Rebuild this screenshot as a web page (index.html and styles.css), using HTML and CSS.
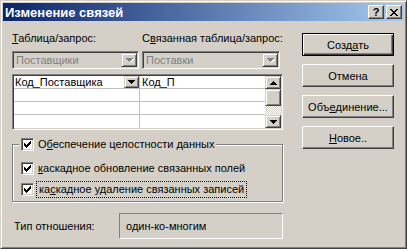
FILE: index.html
```html
<!DOCTYPE html>
<html lang="ru">
<head>
<meta charset="utf-8">
<title>Изменение связей</title>
<link rel="stylesheet" href="styles.css">
</head>
<body>
<div class="window">
  <div class="titlebar">
    <span class="title">Изменение связей</span>
    <div class="tbtns">
      <span class="tbtn q">?</span>
      <span class="tbtn x"><svg width="8" height="7" viewBox="0 0 8 7"><path d="M0 0h2v1h1v1h2V1h1V0h2v1H7v1H6v1H5v1h1v1h1v1h1v1H6V6H5V5H3v1H2v1H0V6h1V5h1V4h1V3H2V2H1V1H0z"/></svg></span>
    </div>
  </div>
  <div class="body">
    <div class="left">
      <div class="labels">
        <span class="lbl1"><u>Т</u>аблица/запрос:</span>
        <span class="lbl2">С<u>в</u>язанная таблица/запрос:</span>
      </div>
      <div class="combos">
        <div class="combo c1"><span class="ctext">Поставщики</span><span class="dd dis"><svg width="7" height="4" viewBox="0 0 7 4"><path d="M0 0h7v1H6v1H5v1H4v1H3V3H2V2H1V1H0z"/></svg></span></div>
        <div class="combo c2"><span class="ctext">Поставки</span><span class="dd dis"><svg width="7" height="4" viewBox="0 0 7 4"><path d="M0 0h7v1H6v1H5v1H4v1H3V3H2V2H1V1H0z"/></svg></span></div>
      </div>
      <div class="grid">
        <div class="cells">
          <div class="row">
            <div class="cell col1 sel"><span>Код_Поставщика</span><span class="dd small"><svg width="7" height="4" viewBox="0 0 7 4"><path d="M0 0h7v1H6v1H5v1H4v1H3V3H2V2H1V1H0z"/></svg></span></div>
            <div class="cell">Код_П</div>
          </div>
          <div class="row"><div class="cell col1"></div><div class="cell"></div></div>
          <div class="row"><div class="cell col1"></div><div class="cell"></div></div>
          <div class="row last"><div class="cell col1"></div><div class="cell"></div></div>
        </div>
        <div class="scrollbar">
          <span class="sbtn"><svg width="7" height="4" viewBox="0 0 7 4"><path d="M3 0h1v1h1v1h1v1h1v1H0V3h1V2h1V1h1z"/></svg></span>
          <span class="thumb"></span>
          <span class="track"></span>
          <span class="sbtn"><svg width="7" height="4" viewBox="0 0 7 4"><path d="M0 0h7v1H6v1H5v1H4v1H3V3H2V2H1V1H0z"/></svg></span>
        </div>
      </div>
      <div class="group">
        <div class="legend">
          <span class="cb"><svg width="7" height="7" viewBox="0 0 7 7"><path d="M0 2h1v3H0zM1 3h1v3H1zM2 4h1v3H2zM3 3h1v3H3zM4 2h1v3H4zM5 1h1v3H5zM6 0h1v3H6z"/></svg></span>
          <span class="cbtext">О<u>б</u>еспечение целостности данных</span>
        </div>
        <div class="cbrow r2">
          <span class="cb"><svg width="7" height="7" viewBox="0 0 7 7"><path d="M0 2h1v3H0zM1 3h1v3H1zM2 4h1v3H2zM3 3h1v3H3zM4 2h1v3H4zM5 1h1v3H5zM6 0h1v3H6z"/></svg></span>
          <span class="cbtext"><u>к</u>аскадное обновление связанных полей</span>
        </div>
        <div class="cbrow r3">
          <span class="cb"><svg width="7" height="7" viewBox="0 0 7 7"><path d="M0 2h1v3H0zM1 3h1v3H1zM2 4h1v3H2zM3 3h1v3H3zM4 2h1v3H4zM5 1h1v3H5zM6 0h1v3H6z"/></svg></span>
          <span class="cbtext focus">ка<u>с</u>кадное удаление связанных записей</span>
        </div>
      </div>
      <div class="typerow">
        <span class="typelbl">Тип отношения:</span>
        <span class="typebox">один-ко-многим</span>
      </div>
    </div>
    <div class="right">
      <div class="btn default">Созд<u>а</u>ть</div>
      <div class="btn">Отмена</div>
      <div class="btn">Объ<u>е</u>динение...</div>
      <div class="btn"><u>Н</u>овое..</div>
    </div>
  </div>
</div>
</body>
</html>
```
FILE: styles.css
```css
html, body {
  margin: 0;
  padding: 0;
  background: #D4D0C8;
}
body {
  font-family: "Liberation Sans", Arial, sans-serif;
  font-size: 11px;
  color: #000;
}
u { text-decoration: underline; text-underline-offset: 1px; }

.window {
  width: 407px;
  height: 249px;
  box-sizing: border-box;
  background: #D4D0C8;
  border: 1px solid;
  border-color: #D4D0C8 #404040 #404040 #D4D0C8;
  box-shadow: inset 1px 1px #fff, inset -1px -1px #808080;
  padding: 2px;
}

.titlebar {
  height: 18px;
  display: flex;
  align-items: center;
  justify-content: space-between;
  background: linear-gradient(to right, #0A246A, #A6CAF0);
  padding: 0 2px 0 2px;
}
.title {
  color: #fff;
  font-weight: bold;
  font-size: 13px;
}
.tbtns { display: flex; gap: 2px; }
.tbtn {
  width: 16px;
  height: 14px;
  box-sizing: border-box;
  background: #D4D0C8;
  border: 1px solid;
  border-color: #fff #404040 #404040 #fff;
  box-shadow: inset -1px -1px #808080;
  display: flex;
  align-items: center;
  justify-content: center;
  font-weight: bold;
  font-size: 11px;
  line-height: 1;
}

.body {
  display: grid;
  grid-template-columns: 271px 92px;
  column-gap: 19px;
  padding: 0 0 0 9px;
}

.left { padding-top: 11px; }
.labels {
  display: flex;
  height: 13px;
  line-height: 13px;
}
.lbl1 { width: 130px; }

.combos {
  display: flex;
  gap: 3px;
  margin-top: 6px;
}
.combo {
  height: 18px;
  box-sizing: border-box;
  border: 1px solid;
  border-color: #808080 #fff #fff #808080;
  box-shadow: inset 1px 1px #404040, inset -1px -1px #D4D0C8;
  background: #D4D0C8;
  display: flex;
  align-items: center;
  justify-content: space-between;
  padding: 1px;
}
.c1 { width: 127px; }
.c2 { width: 138px; }
.ctext { color: #808080; padding-left: 2px; }
.dd {
  width: 16px;
  height: 14px;
  box-sizing: border-box;
  background: #D4D0C8;
  border: 1px solid;
  border-color: #D4D0C8 #404040 #404040 #D4D0C8;
  box-shadow: inset 1px 1px #fff, inset -1px -1px #808080;
  display: flex;
  align-items: center;
  justify-content: center;
}
.dd svg { fill: #000; }
.dd.dis svg { fill: #808080; filter: drop-shadow(1px 1px 0 #fff); }

.grid {
  margin-top: 5px;
  height: 56px;
  box-sizing: border-box;
  border: 1px solid;
  border-color: #808080 #fff #fff #808080;
  box-shadow: inset 1px 1px #404040, inset -1px -1px #D4D0C8;
  background: #fff;
  display: flex;
  padding: 1px;
}
.cells { flex: 1; }
.row {
  display: grid;
  grid-template-columns: 126px 1fr;
  height: 13px;
  box-sizing: border-box;
  border-bottom: 1px solid #C0C0C0;
}
.row.last { border-bottom: none; }
.cell {
  line-height: 12px;
  padding-left: 2px;
  white-space: nowrap;
}
.col1 {
  border-right: 1px solid #C0C0C0;
  display: flex;
  justify-content: space-between;
  padding-left: 1px;
}
.dd.small { width: 15px; height: 12px; }

.scrollbar {
  width: 16px;
  display: flex;
  flex-direction: column;
}
.sbtn, .thumb {
  box-sizing: border-box;
  background: #D4D0C8;
  border: 1px solid;
  border-color: #D4D0C8 #404040 #404040 #D4D0C8;
  box-shadow: inset 1px 1px #fff, inset -1px -1px #808080;
  display: flex;
  align-items: center;
  justify-content: center;
}
.sbtn { height: 13px; }
.thumb { height: 17px; }
.track {
  flex: 1;
  background: repeating-conic-gradient(#D4D0C8 0 25%, #fff 0 50%) 0 0 / 2px 2px;
}

.group {
  margin-top: 14px;
  height: 58px;
  box-sizing: border-box;
  border: 1px solid #808080;
  box-shadow: inset 1px 1px #fff, 1px 1px #fff;
}
.legend {
  display: flex;
  align-items: center;
  gap: 4px;
  width: max-content;
  background: #D4D0C8;
  margin: -7px 0 0 6px;
  padding: 0 2px;
  height: 13px;
}
.cbrow {
  display: flex;
  align-items: center;
  gap: 4px;
  height: 13px;
  padding-left: 8px;
}
.r2 { margin-top: 11px; }
.r3 { margin-top: 8px; }
.cb {
  width: 13px;
  height: 13px;
  box-sizing: border-box;
  background: #fff;
  border: 1px solid;
  border-color: #808080 #fff #fff #808080;
  box-shadow: inset 1px 1px #404040, inset -1px -1px #D4D0C8;
  display: flex;
  align-items: center;
  justify-content: center;
  flex: none;
}
.cb svg { fill: #000; }
.cbtext { white-space: nowrap; line-height: 13px; }
.focus {
  outline: 1px dotted #000;
  outline-offset: 1px;
  padding: 0 1px;
}

.typerow {
  display: flex;
  align-items: center;
  margin-top: 11px;
}
.typelbl { width: 105px; padding-left: 2px; }
.typebox {
  width: 164px;
  height: 26px;
  box-sizing: border-box;
  border: 1px solid;
  border-color: #808080 #fff #fff #808080;
  display: flex;
  align-items: center;
  padding-left: 6px;
}

.right {
  padding-top: 12px;
  display: flex;
  flex-direction: column;
  gap: 8px;
}
.btn {
  width: 92px;
  height: 23px;
  box-sizing: border-box;
  background: #D4D0C8;
  border: 1px solid;
  border-color: #fff #404040 #404040 #fff;
  box-shadow: inset -1px -1px #808080;
  display: flex;
  align-items: center;
  justify-content: center;
}
.btn.default {
  border-color: #000;
  box-shadow: inset 1px 1px #fff, inset -1px -1px #404040, inset -2px -2px #808080;
}
```
